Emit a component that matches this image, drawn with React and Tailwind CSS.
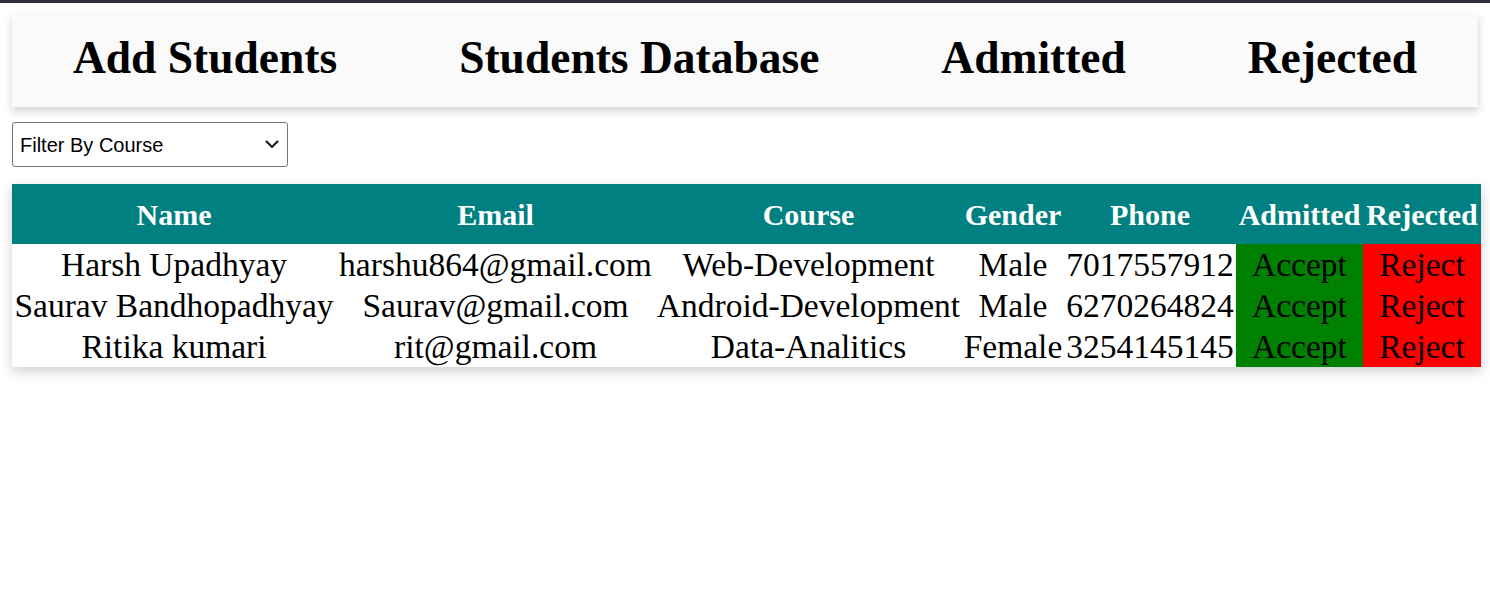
import React from "react";

const rows = [
  ["Harsh Upadhyay", "harshu864@gmail.com", "Web-Development", "Male", "7017557912"],
  ["Saurav Bandhopadhyay", "Saurav@gmail.com", "Android-Development", "Male", "6270264824"],
  ["Ritika kumari", "rit@gmail.com", "Data-Analitics", "Female", "3254145145"],
];

const serif = { fontFamily: '"Liberation Serif", "Times New Roman", serif' };

export default function App() {
  return (
    <div className="w-[1490px] h-[609px] bg-white overflow-hidden" style={serif}>
      <div className="h-[3px] bg-[#2e3240]" />
      <div className="px-[12px]">
        <nav className="mt-[10px] h-[94px] bg-[#fafafa] shadow-[0_4px_8px_rgba(40,40,60,0.22)] flex items-center justify-around px-0 text-black">
          <span className="text-[45.5px] font-bold leading-none pb-[4px]">Add Students</span>
          <span className="text-[45.5px] font-bold leading-none pb-[4px]">Students Database</span>
          <span className="text-[45.5px] font-bold leading-none pb-[4px]">Admitted</span>
          <span className="text-[45.5px] font-bold leading-none pb-[4px]">Rejected</span>
        </nav>
        <div className="mt-[15px] relative w-[276px] h-[45px]">
          <select
            className="appearance-none w-[276px] h-[45px] border border-[#767676] rounded-[3px] bg-white text-[20px] text-black pl-[7px] pr-[30px]"
            style={{ fontFamily: '"Liberation Sans", Arial, sans-serif' }}
            defaultValue=""
          >
            <option value="">Filter By Course</option>
            <option>Web-Development</option>
            <option>Android-Development</option>
            <option>Data-Analitics</option>
          </select>
          <svg
            className="absolute left-[253px] top-[18px] pointer-events-none"
            width="14"
            height="9"
            viewBox="0 0 14 9"
            fill="none"
          >
            <path d="M1.5 1.5 L7 7 L12.5 1.5" stroke="#111" strokeWidth="2" strokeLinecap="round" strokeLinejoin="round" />
          </svg>
        </div>
        <table className="mt-[17px] w-[1469px] table-fixed shadow-[0_4px_12px_rgba(0,0,0,0.2)]">
          <colgroup>
            <col className="w-[324px]" />
            <col className="w-[319px]" />
            <col className="w-[307px]" />
            <col className="w-[102px]" />
            <col className="w-[172px]" />
            <col className="w-[127px]" />
            <col className="w-[118px]" />
          </colgroup>
          <thead>
            <tr className="bg-[#008080] text-white h-[60px]">
              {["Name", "Email", "Course", "Gender", "Phone", "Admitted", "Rejected"].map((h) => (
                <th key={h} className="text-[30px] font-bold p-0 whitespace-nowrap">{h}</th>
              ))}
            </tr>
          </thead>
          <tbody>
            {rows.map((r) => (
              <tr key={r[0]} className="h-[41px] text-[33.5px] text-black">
                {r.map((c, i) => (
                  <td key={i} className="text-center p-0 whitespace-nowrap leading-[39px]">{c}</td>
                ))}
                <td className="text-center p-0 bg-[#008000] leading-[39px]">Accept</td>
                <td className="text-center p-0 bg-[#ff0000] leading-[39px]">Reject</td>
              </tr>
            ))}
          </tbody>
        </table>
      </div>
    </div>
  );
}
